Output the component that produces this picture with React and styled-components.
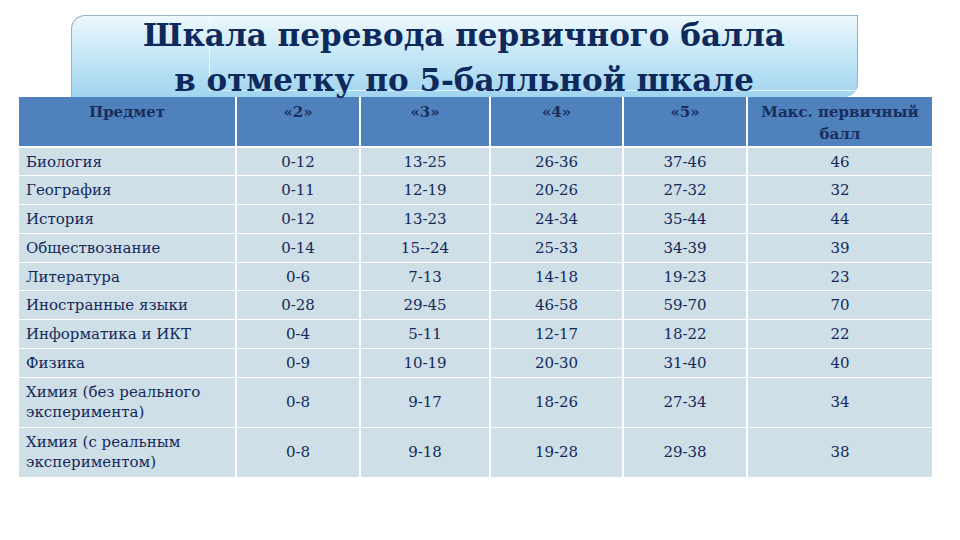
import styled, { createGlobalStyle } from "styled-components";

const GlobalStyle = createGlobalStyle`
  html, body {
    margin: 0;
    padding: 0;
    background: #ffffff;
  }
  body {
    width: 960px;
    height: 540px;
    overflow: hidden;
    font-family: "DejaVu Serif", "Liberation Serif", serif;
  }
`;

const rows = [
  ["Биология", "0-12", "13-25", "26-36", "37-46", "46"],
  ["География", "0-11", "12-19", "20-26", "27-32", "32"],
  ["История", "0-12", "13-23", "24-34", "35-44", "44"],
  ["Обществознание", "0-14", "15--24", "25-33", "34-39", "39"],
  ["Литература", "0-6", "7-13", "14-18", "19-23", "23"],
  ["Иностранные языки", "0-28", "29-45", "46-58", "59-70", "70"],
  ["Информатика и ИКТ", "0-4", "5-11", "12-17", "18-22", "22"],
  ["Физика", "0-9", "10-19", "20-30", "31-40", "40"],
  ["Химия (без реального эксперимента)", "0-8", "9-17", "18-26", "27-34", "34", true],
  ["Химия (с реальным экспериментом)", "0-8", "9-18", "19-28", "29-38", "38", true],
];

const headers = ["Предмет", "«2»", "«3»", "«4»", "«5»", "Макс.  первичный балл"];
const widths = [217, 124, 130, 133, 124, 185];

export default function App() {
  return (
    <Slide>
      <GlobalStyle />
      <TitleBox>
        <Shine />
        <Title>
          Шкала перевода первичного балла
          <br />в отметку по 5-балльной шкале
        </Title>
      </TitleBox>
      <Table>
        <colgroup>
          {widths.map((w, i) => (
            <col key={i} style={{ width: w }} />
          ))}
        </colgroup>
        <thead>
          <tr>
            {headers.map((h, i) => (
              <Th key={i}>{h}</Th>
            ))}
          </tr>
        </thead>
        <tbody>
          {rows.map((r) => (
            <Row key={r[0]} $tall={r[6]}>
              <SubjectCell>{r[0]}</SubjectCell>
              {r.slice(1, 6).map((v, i) => (
                <Cell key={i}>{v}</Cell>
              ))}
            </Row>
          ))}
        </tbody>
      </Table>
    </Slide>
  );
}

const Slide = styled.div`
  width: 960px;
  height: 540px;
  padding-top: 15px;
  box-sizing: border-box;
  display: flex;
  flex-direction: column;
`;

const TitleBox = styled.div`
  position: relative;
  z-index: 2;
  margin-left: 71px;
  width: 787px;
  height: 82px;
  box-sizing: border-box;
  border: 1px solid #8fb3cc;
  border-bottom: none;
  border-radius: 14px 0 14px 0;
  background: linear-gradient(180deg, #eef8fd 0%, #c8e8f7 45%, #a0d4ef 100%);
`;

const Shine = styled.div`
  position: absolute;
  left: 137px;
  top: 0;
  bottom: 6px;
  right: 0;
  border-left: 1px solid rgba(255, 255, 255, 0.7);
  border-bottom: 1px solid rgba(255, 255, 255, 0.7);
  pointer-events: none;
`;

const Title = styled.h1`
  position: relative;
  margin: -3px 0 0 -1px;
  text-align: center;
  font-family: "DejaVu Serif", "Liberation Serif", serif;
  font-weight: bold;
  font-size: 31px;
  line-height: 45px;
  color: #0e2a5c;
`;

const Table = styled.table`
  margin-left: 19px;
  width: 913px;
  border-collapse: collapse;
  table-layout: fixed;
  font-family: "DejaVu Serif", "Liberation Serif", serif;
  color: #13295a;
`;

const Th = styled.th`
  height: 50px;
  padding: 4px 4px 0;
  box-sizing: border-box;
  vertical-align: top;
  background: #4f81bd;
  border-left: 2px solid #ffffff;
  border-bottom: 2px solid #ffffff;
  font-size: 15px;
  font-weight: bold;
  line-height: 22px;
  color: #1a2e5c;
  text-align: center;
  &:first-child {
    border-left: none;
  }
`;

const Row = styled.tr`
  height: ${({ $tall }) => ($tall ? "50px" : "28.8px")};
`;

const Cell = styled.td`
  padding: 0 4px;
  background: #cfdfe8;
  border-left: 2px solid #ffffff;
  border-bottom: 1px solid #ffffff;
  font-size: 15px;
  line-height: 20px;
  text-align: center;
  vertical-align: middle;
`;

const SubjectCell = styled(Cell)`
  border-left: none;
  text-align: left;
  padding-left: 7px;
`;
